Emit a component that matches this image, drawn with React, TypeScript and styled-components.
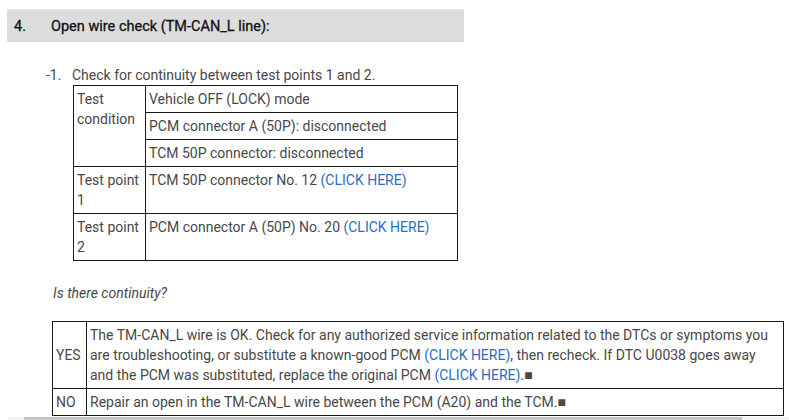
import styled, { createGlobalStyle } from 'styled-components';

const GlobalStyle = createGlobalStyle`
  html, body {
    margin: 0;
    padding: 0;
    background: #ffffff;
  }
  body {
    font-family: Roboto, "Liberation Sans", Arial, sans-serif;
    font-size: 14px;
    color: #484848;
    overflow: hidden;
  }
`;

const Page = styled.div`
  width: 789px;
  height: 420px;
  padding-top: 9px;
  box-sizing: border-box;
`;

const StepHeader = styled.div`
  display: flex;
  align-items: center;
  margin-left: 7px;
  width: 457px;
  height: 33px;
  background: #dcdcdc;
  border-top: 2px solid #e3e3e3;
  box-sizing: border-box;
  font-size: 14.5px;
  font-weight: 400;
  color: #111111;
  -webkit-text-stroke: 0.3px #111111;
`;

const StepNumber = styled.span`
  width: 44px;
  padding-left: 7px;
  box-sizing: border-box;
`;

const SubStep = styled.div`
  display: flex;
  margin-top: 23px;
  padding-left: 46px;
  line-height: 20px;
`;

const SubNumber = styled.span`
  width: 26px;
`;

const Indent = styled.div<{ $left: number; $top?: number }>`
  margin-left: ${(p) => p.$left}px;
  margin-top: ${(p) => p.$top ?? 0}px;
`;

const Table = styled.table<{ $width: number }>`
  border-collapse: collapse;
  width: ${(p) => p.$width}px;
  table-layout: fixed;
  line-height: 20px;
`;

const Cell = styled.td<{ $width?: number; $middle?: boolean }>`
  border: 1px solid #1a1a1a;
  padding: 3px;
  vertical-align: ${(p) => (p.$middle ? 'middle' : 'top')};
  ${(p) => (p.$width ? `width: ${p.$width}px;` : '')}
`;

const Link = styled.a`
  color: #2a6ebd;
  text-decoration: none;
`;

const Question = styled.div`
  margin: 22px 0 0 53px;
  font-style: italic;
  line-height: 20px;
`;

const ScrollTrack = styled.div`
  margin: 1px 0 0 8px;
  height: 6px;
  background: #f1f1f1;
  padding-left: 16px;
`;

const ScrollThumb = styled.div`
  width: 718px;
  height: 6px;
  background: #c4c4c4;
`;

export default function App() {
  return (
    <Page>
      <GlobalStyle />
      <StepHeader>
        <StepNumber>4.</StepNumber>
        <span>Open wire check (TM-CAN_L line):</span>
      </StepHeader>

      <SubStep>
        <SubNumber>-1.</SubNumber>
        <span>Check for continuity between test points 1 and 2.</span>
      </SubStep>

      <Indent $left={73}>
        <Table $width={385}>
          <tbody>
            <tr>
              <Cell $width={65} rowSpan={3}>
                Test condition
              </Cell>
              <Cell>Vehicle OFF (LOCK) mode</Cell>
            </tr>
            <tr>
              <Cell>PCM connector A (50P): disconnected</Cell>
            </tr>
            <tr>
              <Cell>TCM 50P connector: disconnected</Cell>
            </tr>
            <tr>
              <Cell>Test point 1</Cell>
              <Cell>
                TCM 50P connector No. 12 <Link href="#1">(CLICK HERE)</Link>
                <br />
                &nbsp;
              </Cell>
            </tr>
            <tr>
              <Cell>Test point 2</Cell>
              <Cell>
                PCM connector A (50P) No. 20 <Link href="#2">(CLICK HERE)</Link>
                <br />
                &nbsp;
              </Cell>
            </tr>
          </tbody>
        </Table>
      </Indent>

      <Question>Is there continuity?</Question>

      <Indent $left={52} $top={18}>
        <Table $width={732}>
          <tbody>
            <tr>
              <Cell $width={27} $middle>
                YES
              </Cell>
              <Cell>
                The TM-CAN_L wire is OK. Check for any authorized service information related to the DTCs or symptoms you
                <br />
                are troubleshooting, or substitute a known-good PCM <Link href="#3">(CLICK HERE)</Link>, then recheck. If DTC U0038 goes away
                <br />
                and the PCM was substituted, replace the original PCM <Link href="#4">(CLICK HERE)</Link>.■
              </Cell>
            </tr>
            <tr>
              <Cell $middle>NO</Cell>
              <Cell>Repair an open in the TM-CAN_L wire between the PCM (A20) and the TCM.■</Cell>
            </tr>
          </tbody>
        </Table>
      </Indent>

      <ScrollTrack>
        <ScrollThumb />
      </ScrollTrack>
    </Page>
  );
}
